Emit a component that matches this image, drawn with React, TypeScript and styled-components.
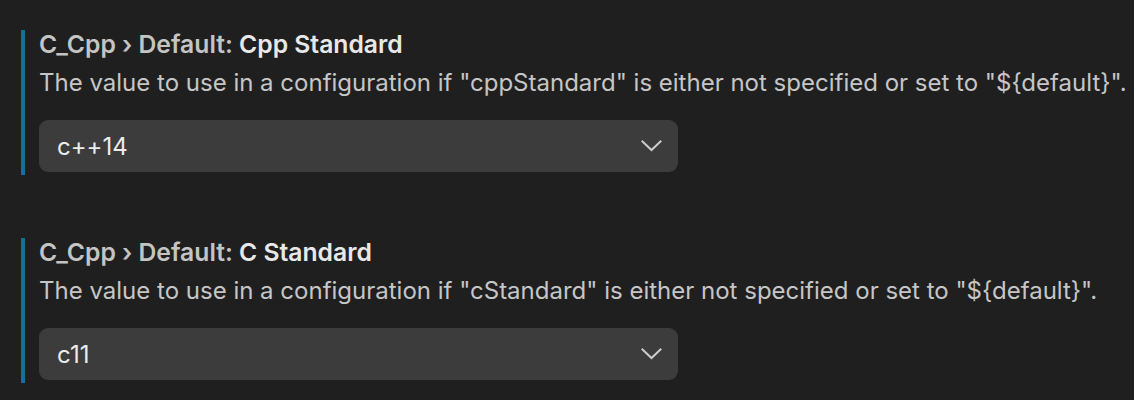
import React from "react";
import styled, { createGlobalStyle } from "styled-components";

const Global = createGlobalStyle`
  html, body {
    margin: 0;
    padding: 0;
    background: #1f1f1f;
  }
  body {
    font-family: Inter, "Noto Sans", sans-serif;
    -webkit-font-smoothing: antialiased;
  }
`;

const Page = styled.div`
  display: flex;
  flex-direction: column;
  gap: 63px;
  padding: 30px 0 0 21px;
  width: 1134px;
  height: 400px;
  box-sizing: border-box;
  overflow: hidden;
`;

const Setting = styled.section`
  display: flex;
  flex-direction: column;
  border-left: 4px solid #0e7394;
  padding: 0 0 3px 14px;
`;

const Title = styled.div`
  font-size: 24.7px;
  line-height: 28px;
  font-weight: 600;
  color: #c4c4c4;
  white-space: nowrap;
`;

const TitleKey = styled.span`
  color: #e8e8e8;
`;

const Description = styled.div`
  font-size: 24px;
  line-height: 28px;
  color: #c6c6c6;
  margin-top: 11px;
  white-space: nowrap;
`;

const Select = styled.div`
  margin-top: 23px;
  width: 639px;
  height: 52px;
  box-sizing: border-box;
  background: #3c3c3c;
  border-radius: 9px;
  display: flex;
  align-items: center;
  justify-content: space-between;
  padding: 0 16px 0 18px;
  color: #ececec;
  font-size: 24px;
`;

const Chevron = () => (
  <svg width="21" height="12" viewBox="0 0 21 12" fill="none">
    <path d="M1.5 1.5 L10.5 10 L19.5 1.5" stroke="#cccccc" strokeWidth="2" strokeLinecap="square" />
  </svg>
);

const items = [
  { key: "Cpp Standard", prop: "cppStandard", value: "c++14" },
  { key: "C Standard", prop: "cStandard", value: "c11" },
];

export default function App() {
  return (
    <>
      <Global />
      <Page>
        {items.map((it) => (
          <Setting key={it.key}>
            <Title>
              C_Cpp › Default: <TitleKey>{it.key}</TitleKey>
            </Title>
            <Description>
              The value to use in a configuration if "{it.prop}" is either not specified or set to "${"{default}"}".
            </Description>
            <Select>
              <span>{it.value}</span>
              <Chevron />
            </Select>
          </Setting>
        ))}
      </Page>
    </>
  );
}
